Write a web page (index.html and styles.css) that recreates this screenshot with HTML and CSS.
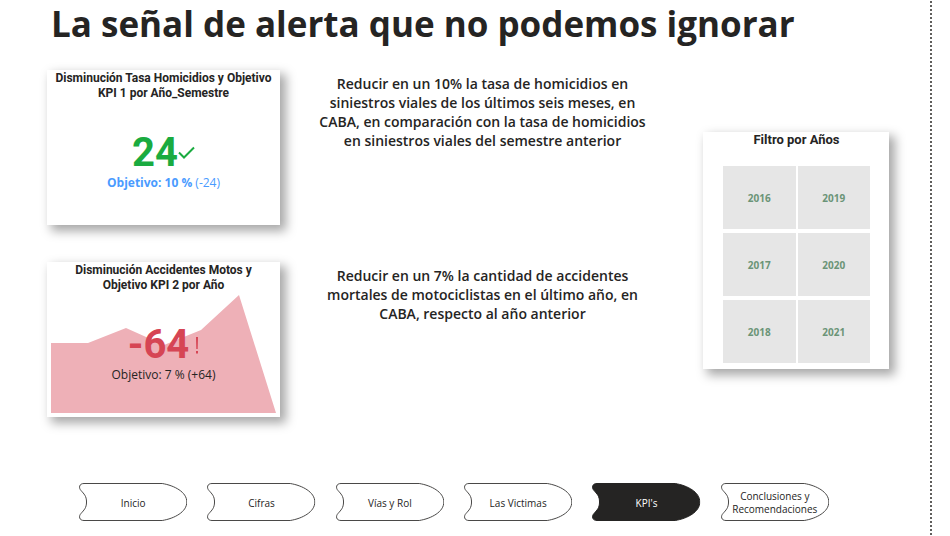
FILE: index.html
```html
<!DOCTYPE html>
<html lang="es">
<head>
<meta charset="utf-8">
<meta name="viewport" content="width=device-width, initial-scale=1">
<title>KPI's</title>
<link rel="stylesheet" href="styles.css">
</head>
<body>
<svg class="defs" aria-hidden="true">
  <symbol id="tab" viewBox="0 0 108 38" preserveAspectRatio="none">
    <path d="M5 .5H83C95 2.500 107.500 9 107.500 19S95 35.500 83 37.500H5C0 37.500 -.5 33 2 30.500C5 27 7.500 25 7.500 19S5 11 2 7.500C-.5 5 0 .5 5 .5Z" vector-effect="non-scaling-stroke"/>
  </symbol>
</svg>
<main class="report">
  <h1>La señal de alerta que no podemos ignorar</h1>
  <div class="board">
    <div class="goals">
      <section class="goal">
        <div class="card kpi good">
          <h2>Disminución Tasa Homicidios y Objetivo KPI 1 por Año_Semestre</h2>
          <div class="reading">
            <p class="value">24<svg class="check" viewBox="0 0 17 14" aria-hidden="true"><path d="M1 6.500L6 11.500L16 1.500"/></svg></p>
            <p class="target"><b>Objetivo: 10 %</b> (-24)</p>
          </div>
        </div>
        <p class="note">Reducir en un 10% la tasa de homicidios en siniestros viales de los últimos seis meses, en CABA, en comparación con la tasa de homicidios en siniestros viales del semestre anterior</p>
      </section>
      <section class="goal">
        <div class="card kpi bad">
          <h2>Disminución Accidentes Motos y<br>Objetivo KPI 2 por Año</h2>
          <svg class="trend" viewBox="0 0 225 118" preserveAspectRatio="none" aria-hidden="true"><path d="M0 48H37L75 33L113 50L150 35L188 0L225 118H0Z"/></svg>
          <div class="reading">
            <p class="value">-64<svg class="alert" viewBox="0 0 4 17" aria-hidden="true"><path d="M1 0H3L2.700 12H1.300ZM1 14H3V16.500H1Z"/></svg></p>
            <p class="target">Objetivo: 7 % (+64)</p>
          </div>
        </div>
        <p class="note">Reducir en un 7% la cantidad de accidentes mortales de motociclistas en el último año, en CABA, respecto al año anterior</p>
      </section>
    </div>
    <section class="card filter">
      <h2>Filtro por Años</h2>
      <div class="years">
        <button type="button">2016</button>
        <button type="button">2019</button>
        <button type="button">2017</button>
        <button type="button">2020</button>
        <button type="button">2018</button>
        <button type="button">2021</button>
      </div>
    </section>
  </div>
  <nav class="pages" aria-label="Páginas">
    <button type="button"><svg aria-hidden="true"><use href="#tab"/></svg><span>Inicio</span></button>
    <button type="button"><svg aria-hidden="true"><use href="#tab"/></svg><span>Cifras</span></button>
    <button type="button"><svg aria-hidden="true"><use href="#tab"/></svg><span>Vías y Rol</span></button>
    <button type="button"><svg aria-hidden="true"><use href="#tab"/></svg><span>Las Victimas</span></button>
    <button type="button" class="current" aria-current="page"><svg aria-hidden="true"><use href="#tab"/></svg><span>KPI's</span></button>
    <button type="button"><svg aria-hidden="true"><use href="#tab"/></svg><span>Conclusiones y Recomendaciones</span></button>
  </nav>
</main>
</body>
</html>
```
FILE: styles.css
```css
* { box-sizing: border-box; }

body {
  margin: 0;
  background: #fff;
  color: #252423;
  font-family: "Open Sans", "Noto Sans", sans-serif;
}

h1, h2, p { margin: 0; }

button {
  border: 0;
  padding: 0;
  font-family: inherit;
  cursor: pointer;
}

.defs { position: absolute; width: 0; height: 0; }

.report {
  margin-right: 18px;
  min-height: 100vh;
  background: repeating-linear-gradient(#fff 0 1px, #605e5c 1px 3px, #fff 3px 4px) right top / 2px 100% no-repeat;
}

h1 {
  padding-left: 51px;
  font-size: 35px;
  line-height: 48px;
  font-weight: 700;
}

.board {
  display: grid;
  grid-template-columns: 656fr 186fr;
  align-items: start;
  padding: 22px 43px 0 47px;
}

.goals { display: grid; gap: 37px; }

.goal {
  display: grid;
  grid-template-columns: 233fr 423fr;
}

.card {
  background: #fff;
  box-shadow: 5px 5px 10px 1px rgba(0, 0, 0, .35);
  text-align: center;
}

.card h2 {
  font-family: Roboto, sans-serif;
  font-size: 13px;
  line-height: 15px;
  font-weight: 700;
}

.kpi {
  display: grid;
  grid-template-rows: 31px 117px;
  padding: 0 4px 7px;
}

.good { color: #1aab40; }
.bad { color: #d64554; }

.kpi h2 {
  grid-area: 1 / 1;
  padding-top: 1px;
  color: #252423;
  font-size: 12px;
}

.kpi .reading, .trend { grid-area: 2 / 1; }

.trend {
  width: 100%;
  height: 118px;
  margin-top: 2px;
  fill: #eeb0b7;
}

.reading {
  padding-top: 30px;
  z-index: 1;
}

.value {
  display: flex;
  justify-content: center;
  align-items: center;
  font: 700 40px/44px Roboto, sans-serif;
}

.check {
  width: 17px;
  height: 14px;
  fill: none;
  stroke: currentColor;
  stroke-width: 2;
}

.alert {
  width: 4px;
  height: 17px;
  margin-left: 6px;
  fill: currentColor;
}

.target {
  font-size: 12px;
  line-height: 16px;
}

.good .target { color: #4a9bff; }
.bad .target { color: #252423; }

.note {
  padding: 4px 52px 0 34px;
  font-size: 14px;
  line-height: 19px;
  font-weight: 600;
  text-align: center;
}

.filter {
  margin-top: 62px;
  padding: 0 19px 6px 20px;
}

.years {
  display: grid;
  grid-template-columns: 1fr 1fr;
  grid-auto-rows: 63px;
  gap: 4px 2px;
  padding-top: 19px;
}

.years button {
  background: #e6e6e6;
  color: #6b9477;
  font-size: 10px;
  font-weight: 700;
}

.pages {
  display: grid;
  grid-template-columns: repeat(6, 1fr);
  gap: 20px;
  padding: 66px 103px 15px 79px;
}

.pages button {
  display: grid;
  align-items: center;
  height: 38px;
  background: none;
  color: #252423;
  font-size: 10px;
  line-height: 13px;
}

.pages svg, .pages span { grid-area: 1 / 1; }

.pages svg {
  width: 100%;
  height: 38px;
  fill: #fff;
  stroke: #4a4948;
}

.pages span { padding: 2px 10px 0; }

.pages .current { color: #fff; }
.pages .current svg { fill: #252423; stroke: #252423; }
```
